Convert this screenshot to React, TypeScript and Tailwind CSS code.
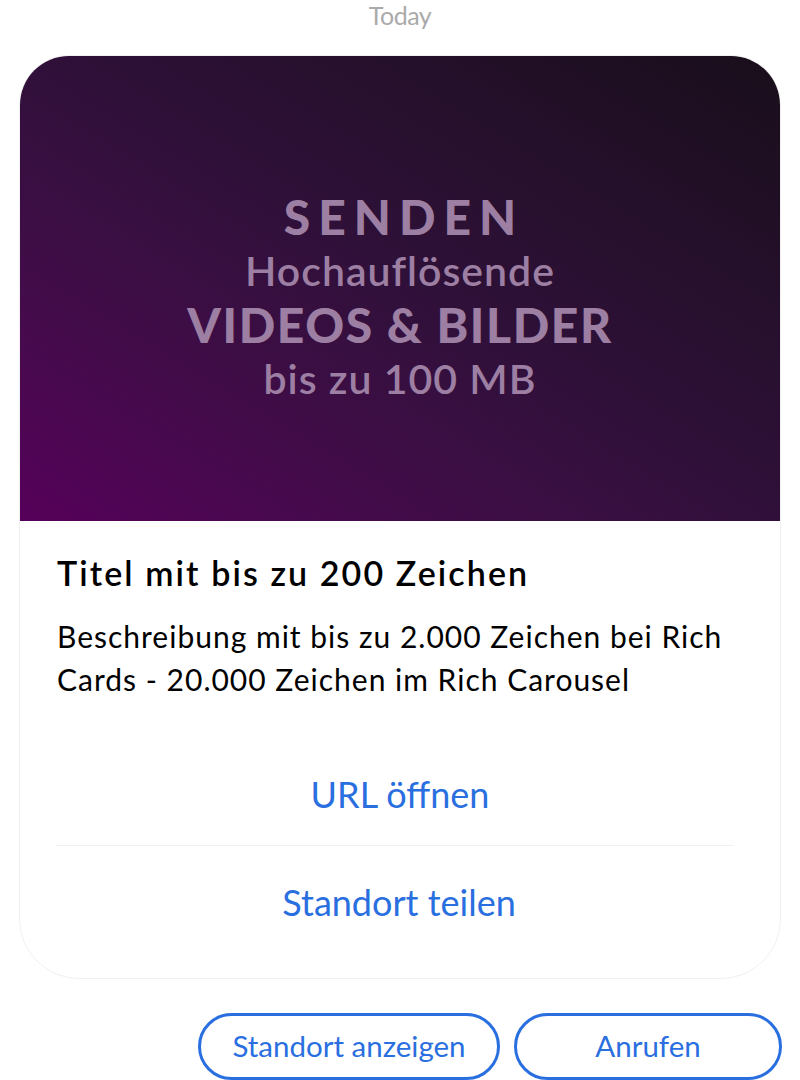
import React from 'react'

const font = { fontFamily: 'Lato, "Open Sans", sans-serif' }

const RichCard: React.FC = () => {
  return (
    <div className="mx-[19px] mt-[55px] rounded-t-[50px] rounded-b-[60px] border border-[#f0f0f0] bg-white overflow-hidden">
      <div className="h-[465px] bg-gradient-to-tr from-[#56005a] via-[#30103a] to-[#190e1b] flex flex-col items-center justify-center text-[#9c7fa2] text-center pt-[18px]">
        <div className="text-[48px] font-black leading-[54px] tracking-[8px] pl-[8px]">SENDEN</div>
        <div className="text-[41px] font-semibold leading-[54px] tracking-[1px]">Hochauflösende</div>
        <div className="text-[48px] font-black leading-[54px] tracking-[1.6px]">VIDEOS &amp; BILDER</div>
        <div className="text-[41px] font-semibold leading-[54px] tracking-[1px]">bis zu 100 MB</div>
      </div>
      <div className="px-[37px] pt-[30px]">
        <h2 className="text-[34px] font-semibold text-black leading-[44px] tracking-[2.1px]">Titel mit bis zu 200 Zeichen</h2>
        <p className="mt-[20px] text-[30px] text-black leading-[43px] tracking-[1px]">
          Beschreibung mit bis zu 2.000 Zeichen bei Rich Cards - 20.000 Zeichen im Rich Carousel
        </p>
      </div>
      <div className="mt-[41px] pl-[36px] pb-[20px] w-[714px]">
        <button className="w-full h-[104px] text-[36px] text-[#2a6fe0] border-b border-[#f0f0f0] pl-[10px]">URL öffnen</button>
        <button className="w-full h-[112px] text-[36px] text-[#2a6fe0] pl-[8px]">Standort teilen</button>
      </div>
    </div>
  )
}

export default function App() {
  return (
    <div className="w-[800px] h-[1080px] bg-white overflow-hidden" style={font}>
      <div className="h-0 text-center text-[25px] leading-[30px] text-[#aaaaaa] tracking-[-0.5px]">Today</div>
      <RichCard />
      <div className="flex justify-end gap-[14px] mt-[34px] pr-[18px]">
        <button className="w-[302px] h-[67px] rounded-full border-[3px] border-[#2a6fe0] text-[#2a6fe0] text-[29.5px]">Standort anzeigen</button>
        <button className="w-[268px] h-[67px] rounded-full border-[3px] border-[#2a6fe0] text-[#2a6fe0] text-[29.5px]">Anrufen</button>
      </div>
    </div>
  )
}
